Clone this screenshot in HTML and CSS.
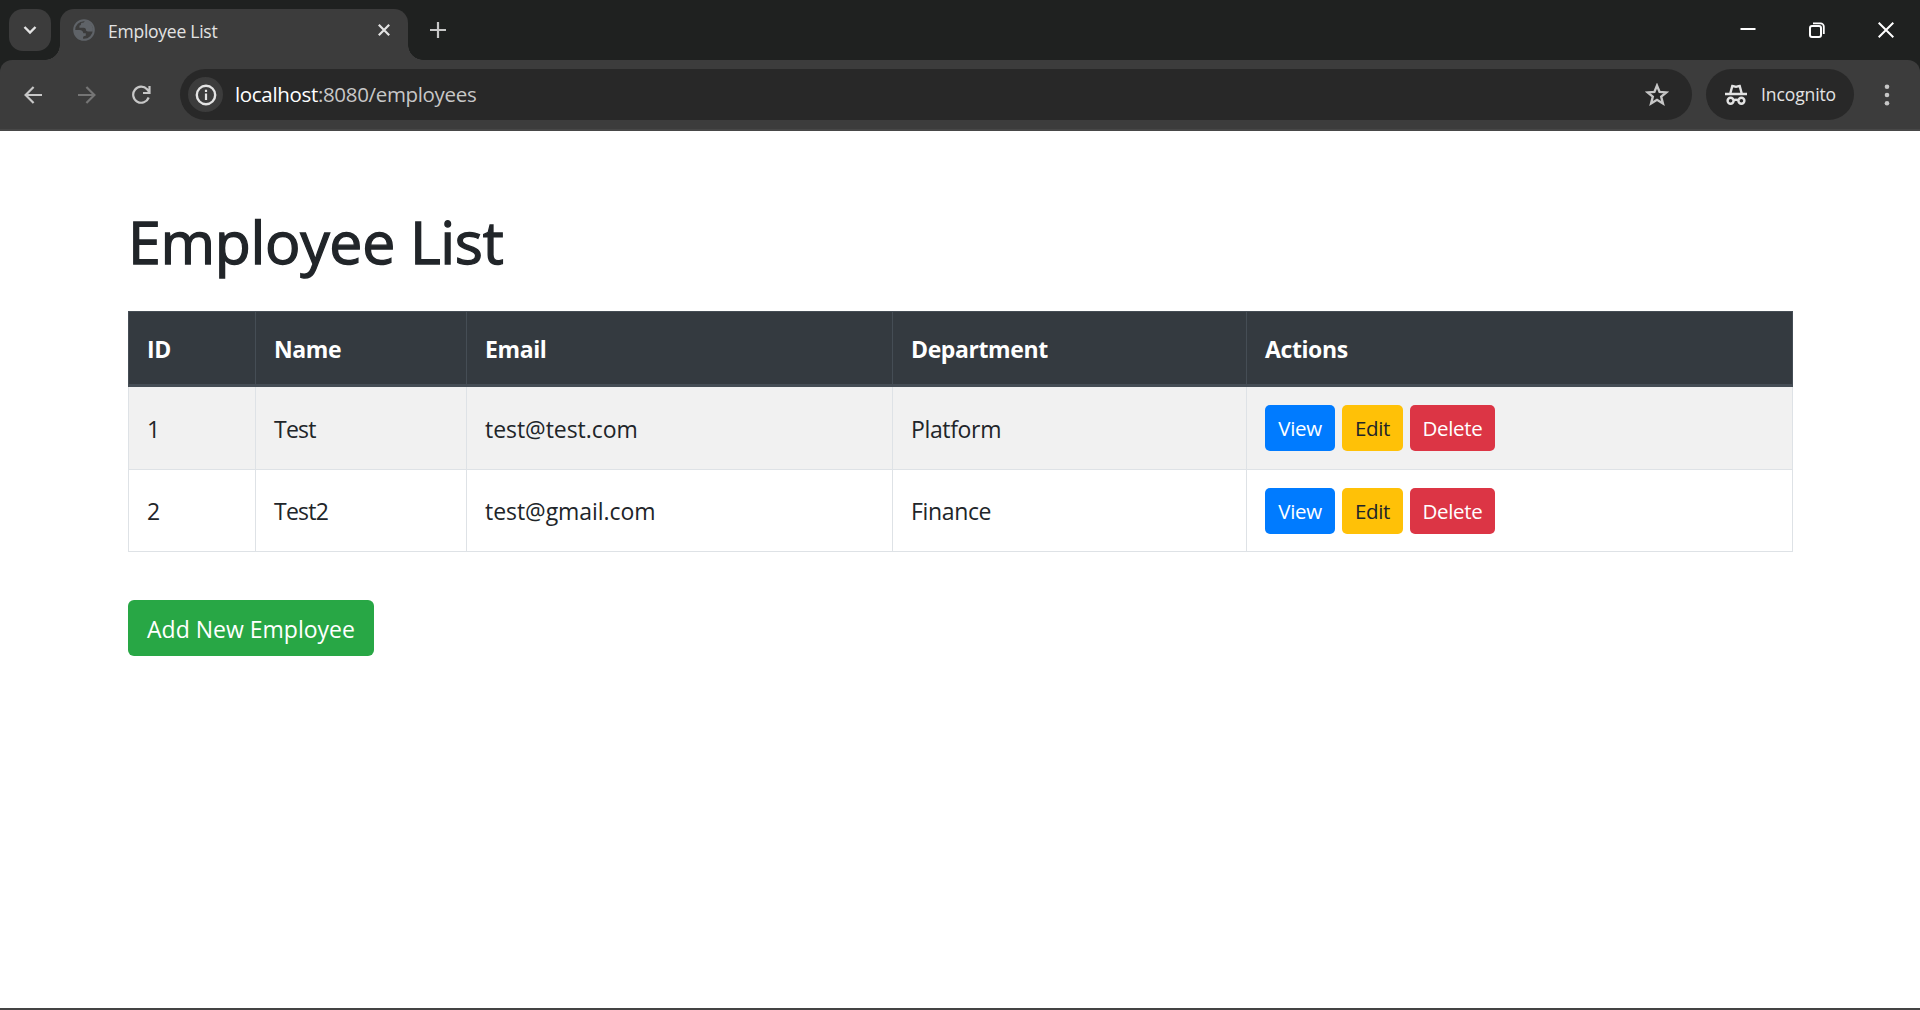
FILE: index.html
```html
<!DOCTYPE html>
<html lang="en">
<head>
<meta charset="utf-8">
<title>Employee List</title>
<link rel="stylesheet" href="styles.css">
</head>
<body>
<div class="window">
  <header class="tabstrip">
    <button class="tab-search" aria-label="Search tabs"><svg width="14" height="10" viewBox="0 0 14 10"><path d="M1.5 2 7 7.5 12.5 2" fill="none" stroke="#e3e3e3" stroke-width="2.4"/></svg></button>
    <div class="tab">
      <svg class="globe" width="22" height="22" viewBox="0 0 22 22"><circle cx="11" cy="11" r="9.8" fill="#3c3c3c" stroke="#5f6368" stroke-width="2"/><path d="M12 1.2c-.3 2-1.500 2.600-3 2.600-.8 0-1 .7-1 1.400 0 .9-.8 1.200-1.600 1.200v2.400h4.300c1.700 0 2.200 1 2.300 2.200.1 1 .8 1.400 2 1.400h4.900A10 10 0 0 0 12 1.200ZM1.300 11h5.200c2.300 0 3.800 1.500 3.800 3.300h2.500v2.500c-1.800 0-2.800.8-2.800 2.300v1.700A10 10 0 0 1 1.300 11Z" fill="#5f6368"/></svg>
      <span class="tab-title">Employee List</span>
      <svg class="tab-close" width="12" height="12" viewBox="0 0 12 12"><path d="m.8.8 10.400 10.400M11.200.8.800 11.200" stroke="#e3e3e3" stroke-width="2.200"/></svg>
    </div>
    <svg class="new-tab" width="16" height="16" viewBox="0 0 16 16"><path d="M8 0v16M0 8h16" stroke="#c7c7c7" stroke-width="2.200"/></svg>
    <div class="window-controls">
      <svg width="16" height="16" viewBox="0 0 16 16"><path d="M.5 7h15" stroke="#fff" stroke-width="2"/></svg>
      <svg width="16" height="16" viewBox="0 0 16 16"><rect x="1" y="4" width="11" height="11" rx="2" fill="none" stroke="#fff" stroke-width="2"/><path d="M4 1.300h7.500a3.300 3.300 0 0 1 3.300 3.300V12" fill="none" stroke="#fff" stroke-width="1.800"/></svg>
      <svg width="16" height="16" viewBox="0 0 16 16"><path d="m.7.700 14.600 14.600M15.300.7.700 15.300" stroke="#fff" stroke-width="2"/></svg>
    </div>
  </header>
  <nav class="toolbar">
    <svg class="back" width="18" height="18" viewBox="0 0 18 18"><path d="M18 9H2M9.600 1 1.600 9l8 8" fill="none" stroke="#c7c7c7" stroke-width="2.200"/></svg>
    <svg class="forward" width="18" height="18" viewBox="0 0 18 18"><path d="M0 9h16M8.400 1l8 8-8 8" fill="none" stroke="#757575" stroke-width="2.200"/></svg>
    <svg class="reload" width="19" height="20" viewBox="0 0 19 20"><path d="M16.700 12.500a8 8 0 1 1-1.600-8.200l2 2.400M17.500 1v7H11" fill="none" stroke="#c7c7c7" stroke-width="2.200"/></svg>
    <div class="address">
      <span class="site-info"><svg width="22" height="22" viewBox="0 0 22 22"><circle cx="11" cy="11" r="9.200" fill="none" stroke="#e3e3e3" stroke-width="2.400"/><path d="M11 9.500V16M11 5.800v2.200" stroke="#e3e3e3" stroke-width="2.200"/></svg></span>
      <span class="url"><span class="host">localhost</span>:8080/employees</span>
      <svg class="star" width="24" height="23" viewBox="0 0 24 23"><path d="m12 2.600 2.600 6.300 6.800.5-5.200 4.300 1.700 6.700-5.900-3.600-5.900 3.600 1.700-6.700-5.200-4.300 6.800-.5Z" fill="none" stroke="#c7c7c7" stroke-width="2.400"/></svg>
    </div>
    <div class="incognito">
      <svg width="22" height="21" viewBox="0 0 22 21"><g fill="none" stroke="#e3e3e3" stroke-width="2.400"><path d="m5.300 9.500 2-7.500c1.600 0 2.200.8 3.700.8s2.100-.8 3.700-.8l2 7.500M0 10h22"/><circle cx="5.600" cy="16.800" r="3"/><circle cx="16.400" cy="16.800" r="3"/><path d="M8.600 16.200q2.400-.8 4.800 0"/></g></svg>
      <span>Incognito</span>
    </div>
    <svg class="menu" width="6" height="22" viewBox="0 0 6 22"><g fill="#c7c7c7"><circle cx="3" cy="2.800" r="2.300"/><circle cx="3" cy="11" r="2.300"/><circle cx="3" cy="19.300" r="2.300"/></g></svg>
  </nav>
  <main class="page">
    <h1>Employee List</h1>
    <table class="employees">
      <colgroup><col class="c-id"><col class="c-name"><col class="c-email"><col class="c-dept"><col class="c-actions"></colgroup>
      <thead><tr><th>ID</th><th>Name</th><th>Email</th><th>Department</th><th>Actions</th></tr></thead>
      <tbody>
        <tr><td>1</td><td class="name">Test</td><td class="email">test@test.com</td><td>Platform</td><td><div class="actions"><a class="btn view">View</a><a class="btn edit">Edit</a><a class="btn delete">Delete</a></div></td></tr>
        <tr><td>2</td><td class="name">Test2</td><td class="email">test@gmail.com</td><td>Finance</td><td><div class="actions"><a class="btn view">View</a><a class="btn edit">Edit</a><a class="btn delete">Delete</a></div></td></tr>
      </tbody>
    </table>
    <a class="add">Add New Employee</a>
  </main>
</div>
</body>
</html>
```
FILE: styles.css
```css
* { box-sizing: border-box; }
body { margin: 0; font-family: "Open Sans", "Noto Sans", sans-serif; color: #212529; background: #fff; }
svg { display: block; flex: none; }
.window { height: 1010px; display: flex; flex-direction: column; border-bottom: 2px solid #444; overflow: hidden; }
.tabstrip { height: 60px; flex: none; display: flex; align-items: flex-start; background: #1f2120; }
.tab-search { width: 42px; height: 42px; margin: 9px 9px 0; padding: 0; border: 0; border-radius: 14px; background: #3c3c3c; display: flex; align-items: center; justify-content: center; }
.tab { position: relative; width: 348px; height: 51px; margin-top: 9px; padding: 0 18px 9px 13px; display: flex; align-items: center; background: #3c3c3c; border-radius: 14px 14px 0 0; }
.tab::before, .tab::after { content: ""; position: absolute; bottom: 0; width: 15px; height: 15px; }
.tab::before { right: 100%; background: radial-gradient(circle at 0 0, transparent 14.5px, #3c3c3c 15px); }
.tab::after { left: 100%; background: radial-gradient(circle at 100% 0, transparent 14.5px, #3c3c3c 15px); }
.tab-title { margin: 2px auto 0 13px; font-size: 17.5px; line-height: 24px; letter-spacing: -0.25px; color: #e3e3e3; }
.new-tab { margin: 22px 0 0 22px; }
.window-controls { display: flex; gap: 53px; margin: 22px 26px 0 auto; }
.toolbar { height: 71px; flex: none; display: flex; align-items: center; padding: 0 30px 0 24px; background: #3c3c3c; border-bottom: 2px solid #474747; border-radius: 12px 12px 0 0; box-shadow: 0 -12px 0 #1f2120; clip-path: inset(0); }
.window { background: linear-gradient(#1f2120 80px, #fff 80px); }
.forward { margin-left: 36px; }
.reload { margin-left: 36px; }
.address { width: 1512px; height: 51px; margin-left: 29px; padding: 0 23px 0 8px; border-radius: 26px; background: #282828; display: flex; align-items: center; }
.site-info { width: 35px; height: 35px; border-radius: 50%; background: #3c3c3c; display: flex; align-items: center; justify-content: center; }
.url { margin: -2px auto 0 12px; font-size: 20.5px; line-height: 30px; letter-spacing: -0.33px; color: #c7c7c7; }
.host { color: #fff; }
.incognito { width: 148px; height: 51px; margin-left: 14px; padding-left: 19px; border-radius: 26px; background: #282828; display: flex; align-items: center; gap: 14px; font-size: 17.5px; letter-spacing: -0.1px; color: #e3e3e3; }
.incognito span { margin-top: -1px; }
.menu { margin-left: auto; }
.page { padding: 70px 128px 0; display: flex; flex-direction: column; align-items: flex-start; }
h1 { margin: 0 0 26px; height: 84px; font-size: 59px; line-height: 80px; font-weight: 500; letter-spacing: -0.35px; -webkit-text-stroke: 1.3px #212529; }
.employees { width: 1665px; table-layout: fixed; border-collapse: collapse; font-size: 23px; line-height: 36px; }
.c-id { width: 127px; }
.c-name { width: 211px; }
.c-email { width: 426px; }
.c-dept { width: 354px; }
th, td { padding: 0 18px; border: 1px solid #dee2e6; text-align: left; letter-spacing: -0.35px; }
th { height: 74px; padding-top: 1px; background: #343a40; color: #fff; border-color: #454d55; border-bottom-width: 3px; font-weight: 700; letter-spacing: -0.4px; }
td { height: 82px; padding-top: 1px; }
tbody tr:first-child td { height: 84px; }
.name { letter-spacing: -0.75px; }
.email { letter-spacing: -0.05px; }
tbody tr:nth-child(odd) { background: #f1f1f1; }
.actions { display: flex; gap: 7px; margin-top: -1px; }
.btn { height: 46px; border-radius: 5px; display: flex; align-items: center; justify-content: center; font-size: 20.5px; letter-spacing: -0.3px; color: #fff; }
.view { width: 70px; background: #007bff; }
.edit { width: 61px; background: #ffc107; color: #212529; }
.delete { width: 85px; background: #dc3545; }
.add { width: 246px; height: 56px; margin-top: 48px; padding-top: 2px; border-radius: 6px; background: #28a745; color: #fff; font-size: 23px; display: flex; align-items: center; justify-content: center; }
```
